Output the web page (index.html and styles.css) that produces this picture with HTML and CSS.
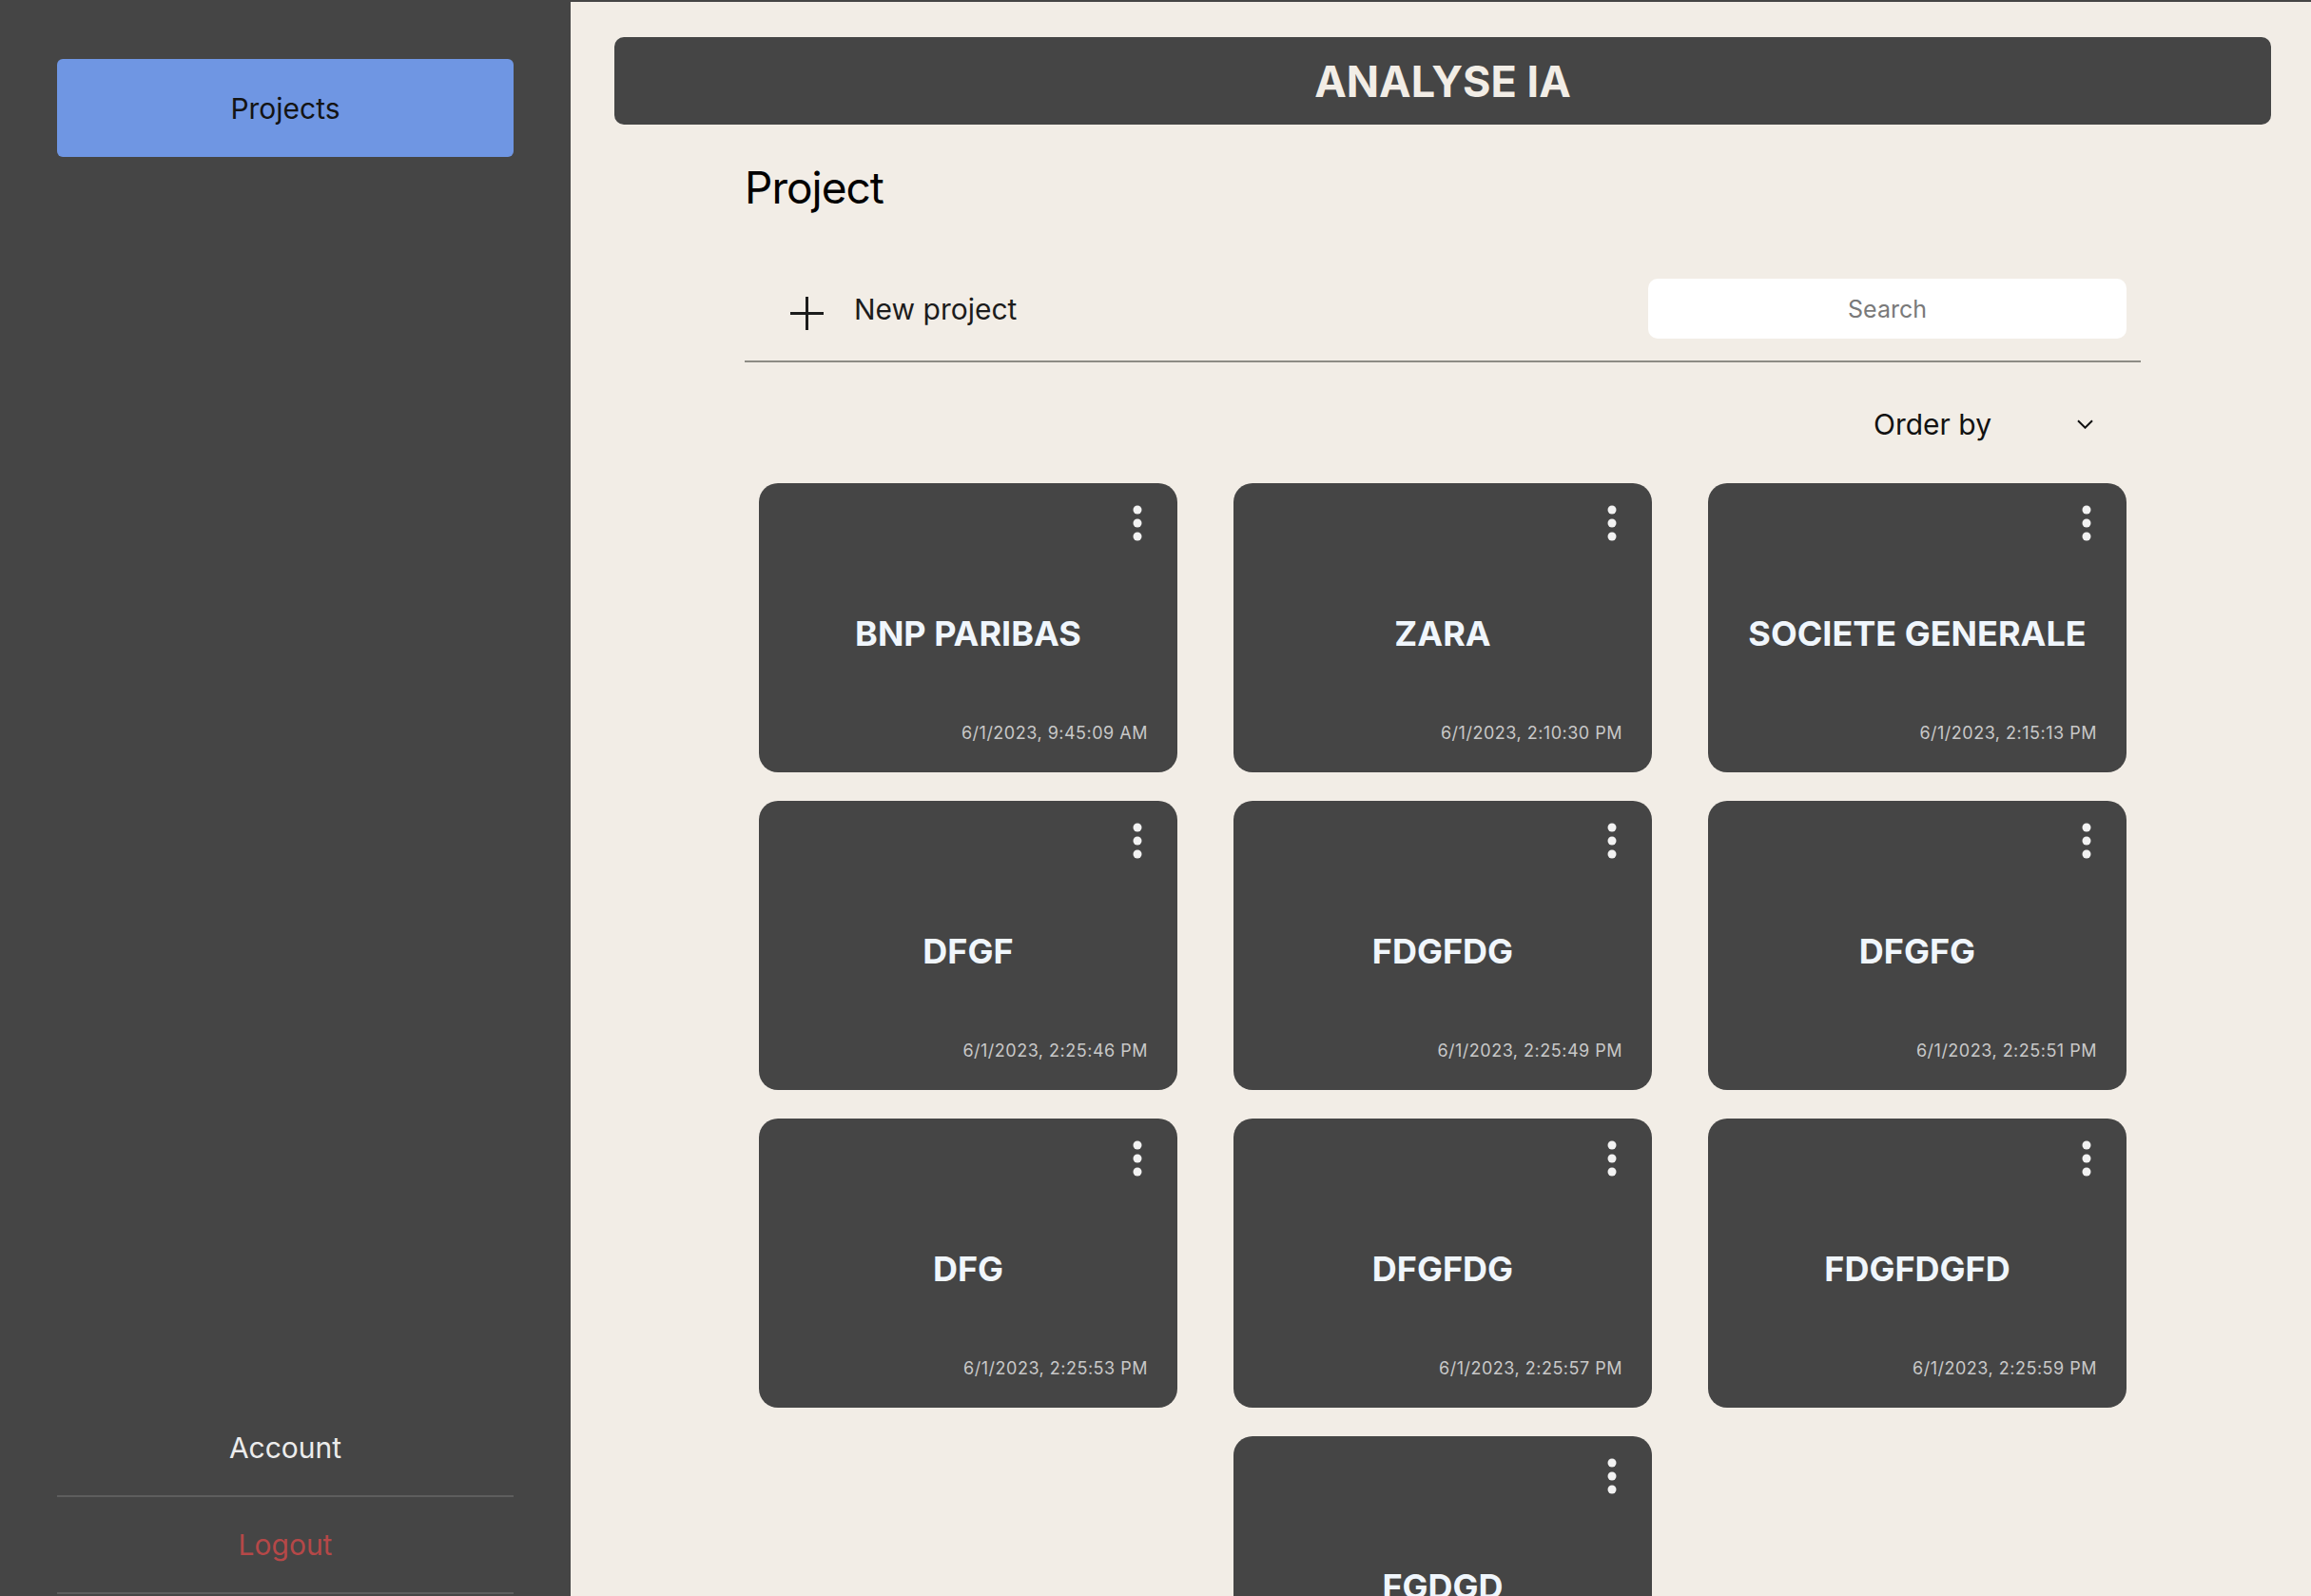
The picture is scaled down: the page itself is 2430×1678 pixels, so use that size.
FILE: index.html
```html
<!DOCTYPE html>
<html lang="fr">
<head>
<meta charset="utf-8">
<title>Analyse IA</title>
<link rel="stylesheet" href="styles.css">
</head>
<body>
<div class="app">
  <aside class="sidebar">
    <nav class="nav-top">
      <a class="nav-btn">Projects</a>
    </nav>
    <div class="nav-bottom">
      <a class="nav-item">Account</a>
      <a class="nav-item logout">Logout</a>
    </div>
  </aside>
  <main class="main">
    <header class="topbar"><h1>ANALYSE IA</h1></header>
    <section class="content">
      <h2 class="page-title">Project</h2>
      <div class="toolbar">
        <button class="new-btn">
          <svg class="plus" width="35" height="35" viewBox="0 0 35 35"><path d="M17.5 0V35M0 17.5H35" stroke="#1c1c1c" stroke-width="3"/></svg>
          <span>New project</span>
        </button>
        <input class="search" type="text" placeholder="Search">
      </div>
      <div class="order-row">
        <div class="order">
          <span>Order by</span>
          <svg width="17" height="10" viewBox="0 0 17 10"><path d="M1 1.2L8.5 8.7L16 1.2" fill="none" stroke="#111" stroke-width="2"/></svg>
        </div>
      </div>
      <div class="cards">
        <div class="card"><div class="card-top"><svg class="dots" width="10" height="38" viewBox="0 0 10 38"><circle cx="5" cy="5" r="4.5"/><circle cx="5" cy="19" r="4.5"/><circle cx="5" cy="33" r="4.5"/></svg></div><div class="card-title">BNP PARIBAS</div><div class="card-date">6/1/2023, 9:45:09 AM</div></div>
        <div class="card"><div class="card-top"><svg class="dots" width="10" height="38" viewBox="0 0 10 38"><circle cx="5" cy="5" r="4.5"/><circle cx="5" cy="19" r="4.5"/><circle cx="5" cy="33" r="4.5"/></svg></div><div class="card-title">ZARA</div><div class="card-date">6/1/2023, 2:10:30 PM</div></div>
        <div class="card"><div class="card-top"><svg class="dots" width="10" height="38" viewBox="0 0 10 38"><circle cx="5" cy="5" r="4.5"/><circle cx="5" cy="19" r="4.5"/><circle cx="5" cy="33" r="4.5"/></svg></div><div class="card-title">SOCIETE GENERALE</div><div class="card-date">6/1/2023, 2:15:13 PM</div></div>
        <div class="card"><div class="card-top"><svg class="dots" width="10" height="38" viewBox="0 0 10 38"><circle cx="5" cy="5" r="4.5"/><circle cx="5" cy="19" r="4.5"/><circle cx="5" cy="33" r="4.5"/></svg></div><div class="card-title">DFGF</div><div class="card-date">6/1/2023, 2:25:46 PM</div></div>
        <div class="card"><div class="card-top"><svg class="dots" width="10" height="38" viewBox="0 0 10 38"><circle cx="5" cy="5" r="4.5"/><circle cx="5" cy="19" r="4.5"/><circle cx="5" cy="33" r="4.5"/></svg></div><div class="card-title">FDGFDG</div><div class="card-date">6/1/2023, 2:25:49 PM</div></div>
        <div class="card"><div class="card-top"><svg class="dots" width="10" height="38" viewBox="0 0 10 38"><circle cx="5" cy="5" r="4.5"/><circle cx="5" cy="19" r="4.5"/><circle cx="5" cy="33" r="4.5"/></svg></div><div class="card-title">DFGFG</div><div class="card-date">6/1/2023, 2:25:51 PM</div></div>
        <div class="card"><div class="card-top"><svg class="dots" width="10" height="38" viewBox="0 0 10 38"><circle cx="5" cy="5" r="4.5"/><circle cx="5" cy="19" r="4.5"/><circle cx="5" cy="33" r="4.5"/></svg></div><div class="card-title">DFG</div><div class="card-date">6/1/2023, 2:25:53 PM</div></div>
        <div class="card"><div class="card-top"><svg class="dots" width="10" height="38" viewBox="0 0 10 38"><circle cx="5" cy="5" r="4.5"/><circle cx="5" cy="19" r="4.5"/><circle cx="5" cy="33" r="4.5"/></svg></div><div class="card-title">DFGFDG</div><div class="card-date">6/1/2023, 2:25:57 PM</div></div>
        <div class="card"><div class="card-top"><svg class="dots" width="10" height="38" viewBox="0 0 10 38"><circle cx="5" cy="5" r="4.5"/><circle cx="5" cy="19" r="4.5"/><circle cx="5" cy="33" r="4.5"/></svg></div><div class="card-title">FDGFDGFD</div><div class="card-date">6/1/2023, 2:25:59 PM</div></div>
        <div class="card"><div class="card-top"><svg class="dots" width="10" height="38" viewBox="0 0 10 38"><circle cx="5" cy="5" r="4.5"/><circle cx="5" cy="19" r="4.5"/><circle cx="5" cy="33" r="4.5"/></svg></div><div class="card-title">FGDGD</div><div class="card-date">6/1/2023, 2:26:02 PM</div></div>
      </div>
    </section>
  </main>
</div>
</body>
</html>
```
FILE: styles.css
```css
* { box-sizing: border-box; }

html, body {
  margin: 0;
  padding: 0;
  background: #454545;
  font-family: Inter, "Noto Sans", "Liberation Sans", sans-serif;
}

.app {
  display: flex;
  height: 100vh;
  overflow: hidden;
}

/* Sidebar */
.sidebar {
  width: 600px;
  flex-shrink: 0;
  background: #454545;
  display: flex;
  flex-direction: column;
  justify-content: space-between;
  padding: 62px 60px 2px;
}

.nav-btn {
  display: flex;
  align-items: center;
  justify-content: center;
  height: 103px;
  background: #6f96e3;
  border-radius: 6px;
  font-size: 30px;
  color: #141414;
  cursor: pointer;
}

.nav-bottom {
  display: flex;
  flex-direction: column;
}

.nav-item {
  display: flex;
  align-items: center;
  justify-content: center;
  height: 102px;
  border-bottom: 2px solid #5e5e5e;
  font-size: 30px;
  color: #ececec;
  cursor: pointer;
}

.nav-item.logout {
  color: #b54848;
}

/* Main */
.main {
  flex: 1;
  min-width: 0;
  background: #f2ede6;
  border-top: 2px solid #454545;
  padding: 37px 42px 0 46px;
  overflow: hidden;
}

.topbar {
  height: 92px;
  background: #454545;
  border-radius: 10px;
  display: flex;
  align-items: center;
  justify-content: center;
}

.topbar h1 {
  margin: 0;
  font-size: 45px;
  font-weight: 700;
  color: #f2ede6;
}

.content {
  margin: 0 137px;
}

.page-title {
  margin: 37px 0 0 0;
  font-size: 46px;
  font-weight: 400;
  letter-spacing: -1px;
  line-height: 58px;
  color: #000;
}

.toolbar {
  margin-top: 67px;
  display: flex;
  align-items: center;
  justify-content: space-between;
  padding: 0 15px 23px 48px;
  border-bottom: 2px solid #8d8c85;
}

.new-btn {
  display: flex;
  align-items: center;
  gap: 32px;
  background: none;
  border: none;
  padding: 0;
  font-family: inherit;
  font-size: 30px;
  color: #1c1c1c;
  cursor: pointer;
}

.new-btn .plus {
  margin-top: 10px;
}

.search {
  width: 503px;
  height: 63px;
  border: none;
  border-radius: 10px;
  background: #fff;
  font-family: inherit;
  font-size: 25px;
  text-align: center;
  outline: none;
}

.search::placeholder {
  color: #7a7a7a;
}

.order-row {
  display: flex;
  justify-content: flex-end;
  margin: 47px 50px 0 0;
}

.order {
  display: flex;
  align-items: center;
  gap: 90px;
  font-size: 30px;
  line-height: 36px;
  color: #111;
}

/* Cards */
.cards {
  display: flex;
  flex-wrap: wrap;
  justify-content: center;
  gap: 30px 59px;
  margin-top: 44px;
  padding: 0 15px;
}

.card {
  width: 440px;
  height: 304px;
  background: #454545;
  border-radius: 20px;
  display: flex;
  flex-direction: column;
}

.card-top {
  height: 64px;
  display: flex;
  justify-content: flex-end;
  padding: 23px 37px 0 0;
}

.dots {
  fill: #f2f2f2;
}

.card-title {
  flex: 1;
  display: flex;
  align-items: center;
  justify-content: center;
  font-size: 36px;
  font-weight: 700;
  color: #f0f6fc;
}

.card-date {
  text-align: right;
  padding: 0 31px 30px;
  font-size: 18px;
  line-height: 22px;
  letter-spacing: 0.5px;
  color: #c8c8c8;
}
```
